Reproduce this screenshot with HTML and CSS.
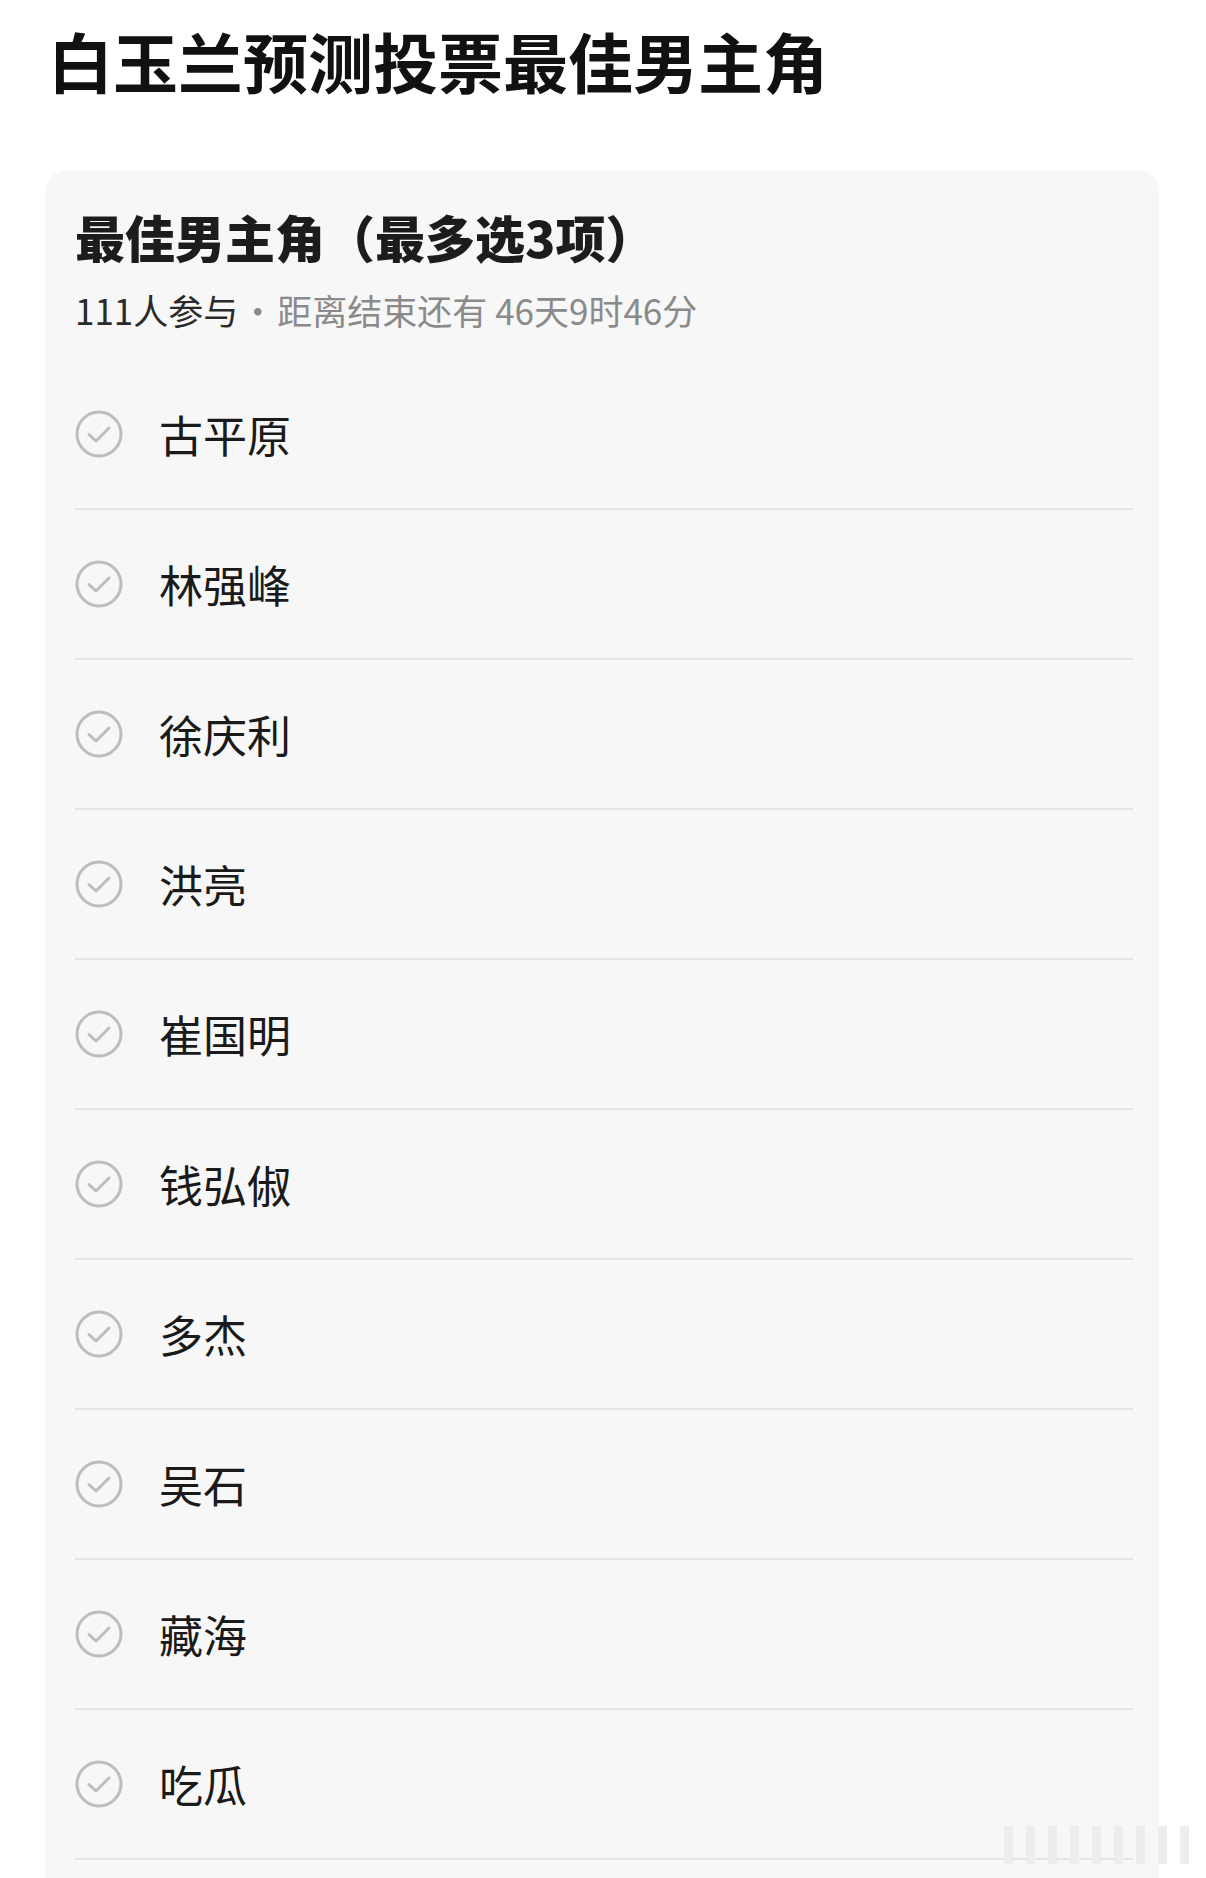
FILE: index.html
```html
<!DOCTYPE html>
<html lang="zh-CN">
<head>
    <meta charset="UTF-8">
    <title>白玉兰预测投票最佳男主角</title>
    <link rel="stylesheet" href="styles.css">
</head>
<body>
    <h1 class="page-title">白玉兰预测投票最佳男主角</h1>
    <div class="poll">
        <h2 class="poll-title">最佳男主角（最多选3项）</h2>
        <div class="poll-meta"><span class="count">111人参与</span><span class="dot">·</span>距离结束还有 46天9时46分</div>
        <ul class="options">
            <li class="option"><svg class="check" viewBox="0 0 48 48"><circle cx="24" cy="24" r="22"/><path d="M14 24.5 L21 31 L34 18"/></svg><span>古平原</span></li>
            <li class="option"><svg class="check" viewBox="0 0 48 48"><circle cx="24" cy="24" r="22"/><path d="M14 24.5 L21 31 L34 18"/></svg><span>林强峰</span></li>
            <li class="option"><svg class="check" viewBox="0 0 48 48"><circle cx="24" cy="24" r="22"/><path d="M14 24.5 L21 31 L34 18"/></svg><span>徐庆利</span></li>
            <li class="option"><svg class="check" viewBox="0 0 48 48"><circle cx="24" cy="24" r="22"/><path d="M14 24.5 L21 31 L34 18"/></svg><span>洪亮</span></li>
            <li class="option"><svg class="check" viewBox="0 0 48 48"><circle cx="24" cy="24" r="22"/><path d="M14 24.5 L21 31 L34 18"/></svg><span>崔国明</span></li>
            <li class="option"><svg class="check" viewBox="0 0 48 48"><circle cx="24" cy="24" r="22"/><path d="M14 24.5 L21 31 L34 18"/></svg><span>钱弘俶</span></li>
            <li class="option"><svg class="check" viewBox="0 0 48 48"><circle cx="24" cy="24" r="22"/><path d="M14 24.5 L21 31 L34 18"/></svg><span>多杰</span></li>
            <li class="option"><svg class="check" viewBox="0 0 48 48"><circle cx="24" cy="24" r="22"/><path d="M14 24.5 L21 31 L34 18"/></svg><span>吴石</span></li>
            <li class="option"><svg class="check" viewBox="0 0 48 48"><circle cx="24" cy="24" r="22"/><path d="M14 24.5 L21 31 L34 18"/></svg><span>藏海</span></li>
            <li class="option"><svg class="check" viewBox="0 0 48 48"><circle cx="24" cy="24" r="22"/><path d="M14 24.5 L21 31 L34 18"/></svg><span>吃瓜</span></li>
        </ul>
    </div>
    <div class="watermark"><i></i><i></i><i></i><i></i><i></i><i></i><i></i><i></i><i></i></div>
</body>
</html>
```

FILE: styles.css
```css
body {
    margin: 0;
    padding: 0 47px 0 45px;
    background-color: #fff;
    font-family: "Noto Sans CJK SC", "Noto Sans", sans-serif;
    color: #1a1a1a;
    height: 1878px;
    overflow: hidden;
}
.page-title {
    margin: 0;
    padding: 19px 0 0 3px;
    font-size: 65px;
    line-height: 82px;
    font-weight: 700;
    color: #111;
    height: 151px;
}
.poll {
    background-color: #f7f7f7;
    border-radius: 22px;
    padding: 36px 26px 40px 30px;
}
.poll-title {
    margin: 0;
    font-size: 50px;
    line-height: 60px;
    font-weight: 900;
    color: #1c1c1c;
}
.poll-meta {
    margin-top: 22px;
    font-size: 35px;
    line-height: 44px;
    color: #8a8a8a;
}
.poll-meta .count {
    color: #2a2a2a;
}
.poll-meta .dot {
    margin: 0 2px;
}
.options {
    list-style: none;
    margin: 28px 0 0;
    padding: 0;
}
.option {
    display: flex;
    align-items: center;
    gap: 36px;
    height: 148px;
    border-bottom: 2px solid #e4e4e4;
    font-size: 44px;
    color: #1a1a1a;
}
.check {
    width: 48px;
    height: 48px;
    fill: none;
    stroke: #bdbdbd;
    stroke-width: 3;
    stroke-linecap: round;
    stroke-linejoin: round;
}
.watermark {
    position: absolute;
    top: 1826px;
    left: 1004px;
    display: flex;
    gap: 13px;
}
.watermark i {
    display: block;
    width: 9px;
    height: 38px;
    background-color: #ededed;
}
```
